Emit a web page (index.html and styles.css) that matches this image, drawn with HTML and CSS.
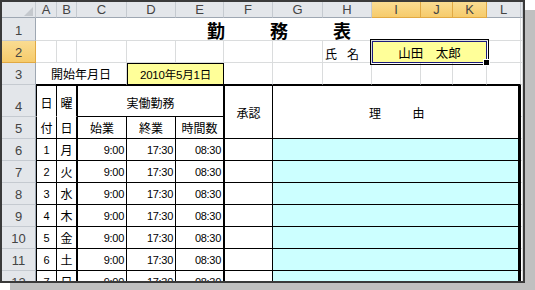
FILE: index.html
```html
<!DOCTYPE html>
<html lang="ja">
<head>
<meta charset="utf-8">
<title>勤務表</title>
<link rel="stylesheet" href="styles.css">
</head>
<body>
<div class="frame">
  <div class="sheet">
    <!-- column headers -->
    <div class="hd corner"></div>
    <div class="hd">A</div>
    <div class="hd">B</div>
    <div class="hd">C</div>
    <div class="hd">D</div>
    <div class="hd">E</div>
    <div class="hd">F</div>
    <div class="hd">G</div>
    <div class="hd">H</div>
    <div class="hd sel">I</div>
    <div class="hd sel">J</div>
    <div class="hd sel">K</div>
    <div class="hd">L</div>
    <div class="hd"></div>

    <!-- row 1 -->
    <div class="rh">1</div>
    <div class="c title">勤　　務　　表</div>
    <div class="c"></div>

    <!-- row 2 -->
    <div class="rh sel">2</div>
    <div class="c"></div>
    <div class="c"></div>
    <div class="c"></div>
    <div class="c"></div>
    <div class="c"></div>
    <div class="c"></div>
    <div class="c"></div>
    <div class="c label">氏　名</div>
    <div class="c name">山田　太郎<span class="handle"></span></div>
    <div class="c"></div>
    <div class="c"></div>

    <!-- row 3 -->
    <div class="rh">3</div>
    <div class="c span3 tt jp">開始年月日</div>
    <div class="c date">2010年5月1日</div>
    <div class="c tt"></div>
    <div class="c tt"></div>
    <div class="c tt"></div>
    <div class="c tt"></div>
    <div class="c tt"></div>
    <div class="c tt"></div>
    <div class="c tt"></div>
    <div class="c"></div>

    <!-- row 4 -->
    <div class="rh">4</div>
    <div class="c colA top open jp hdr">日</div>
    <div class="c colB top open jp hdr">曜</div>
    <div class="c span3 work top jp hdr">実働勤務</div>
    <div class="c colF top rows2 jp">承認</div>
    <div class="c reason top jp">理　　由</div>
    <div class="c"></div>

    <!-- row 5 -->
    <div class="rh">5</div>
    <div class="c colA jp">付</div>
    <div class="c colB jp">日</div>
    <div class="c colC jp">始業</div>
    <div class="c colD jp">終業</div>
    <div class="c colE jp">時間数</div>
    <div class="c"></div>

    <!-- row 6 -->
    <div class="rh">6</div>
    <div class="c colA num">1</div>
    <div class="c colB jp">月</div>
    <div class="c colC num r">9:00</div>
    <div class="c colD num r">17:30</div>
    <div class="c colE num r">08:30</div>
    <div class="c colF"></div>
    <div class="c memo"></div>
    <div class="c"></div>

    <!-- row 7 -->
    <div class="rh">7</div>
    <div class="c colA num">2</div>
    <div class="c colB jp">火</div>
    <div class="c colC num r">9:00</div>
    <div class="c colD num r">17:30</div>
    <div class="c colE num r">08:30</div>
    <div class="c colF"></div>
    <div class="c memo"></div>
    <div class="c"></div>

    <!-- row 8 -->
    <div class="rh">8</div>
    <div class="c colA num">3</div>
    <div class="c colB jp">水</div>
    <div class="c colC num r">9:00</div>
    <div class="c colD num r">17:30</div>
    <div class="c colE num r">08:30</div>
    <div class="c colF"></div>
    <div class="c memo"></div>
    <div class="c"></div>

    <!-- row 9 -->
    <div class="rh">9</div>
    <div class="c colA num">4</div>
    <div class="c colB jp">木</div>
    <div class="c colC num r">9:00</div>
    <div class="c colD num r">17:30</div>
    <div class="c colE num r">08:30</div>
    <div class="c colF"></div>
    <div class="c memo"></div>
    <div class="c"></div>

    <!-- row 10 -->
    <div class="rh">10</div>
    <div class="c colA num">5</div>
    <div class="c colB jp">金</div>
    <div class="c colC num r">9:00</div>
    <div class="c colD num r">17:30</div>
    <div class="c colE num r">08:30</div>
    <div class="c colF"></div>
    <div class="c memo"></div>
    <div class="c"></div>

    <!-- row 11 -->
    <div class="rh">11</div>
    <div class="c colA num">6</div>
    <div class="c colB jp">土</div>
    <div class="c colC num r">9:00</div>
    <div class="c colD num r">17:30</div>
    <div class="c colE num r">08:30</div>
    <div class="c colF"></div>
    <div class="c memo"></div>
    <div class="c"></div>

    <!-- row 12 -->
    <div class="rh">12</div>
    <div class="c colA num">7</div>
    <div class="c colB jp">日</div>
    <div class="c colC num r">9:00</div>
    <div class="c colD num r">17:30</div>
    <div class="c colE num r">08:30</div>
    <div class="c colF"></div>
    <div class="c memo"></div>
    <div class="c"></div>
  </div>
</div>
</body>
</html>
```

FILE: styles.css
```css
* { box-sizing: border-box; }

html, body {
  margin: 0;
  padding: 0;
  background: #ffffff;
}

body {
  width: 535px;
  height: 290px;
  overflow: hidden;
}

.frame {
  width: 525px;
  height: 283px;
  border: 2px solid #3a3a3a;
  box-shadow: 10px 10px 0 #c0c0c0;
  background: #ffffff;
  overflow: hidden;
}

.sheet {
  display: grid;
  grid-template-columns: 34px 21px 20px 50px 49px 48px 49px 50px 49px 49px 32px 34px 34px 2px;
  grid-template-rows: 16px 23px 22px 22px 32px 22px repeat(7, 22px);
  font-family: "Liberation Sans", "Noto Sans CJK JP", sans-serif;
  color: #000;
}

/* headers */
.hd {
  background: #e3e6ea;
  border-right: 1px solid #c5cad0;
  border-bottom: 1px solid #9ea7b2;
  color: #444;
  font-size: 13px;
  line-height: 13px;
  display: flex;
  align-items: flex-end;
  justify-content: center;
  padding-bottom: 1px;
}

.hd.sel,
.rh.sel {
  background: linear-gradient(#fadc92, #f6cb6b);
  border-right-color: #e1a943;
  border-bottom-color: #e1a943;
}

.corner {
  justify-content: flex-end;
  padding: 0 2px 1px 0;
}

.corner::after {
  content: "";
  width: 0;
  height: 0;
  border-left: 9px solid transparent;
  border-bottom: 9px solid #c4c8cd;
}

.rh {
  background: #e3e6ea;
  border-right: 1px solid #9ea7b2;
  border-bottom: 1px solid #c5cad0;
  color: #444;
  font-size: 13px;
  line-height: 13px;
  display: flex;
  align-items: flex-end;
  justify-content: center;
  padding-bottom: 3px;
}

/* cells */
.c {
  border-right: 1px solid #dadcdd;
  border-bottom: 1px solid #dadcdd;
  display: flex;
  align-items: center;
  justify-content: center;
  font-size: 12px;
  line-height: 14px;
  white-space: nowrap;
  overflow: hidden;
}

.jp {
  font-family: "Noto Sans CJK JP", sans-serif;
  font-size: 12px;
  padding-top: 1px;
}

.num {
  font-family: "Liberation Sans", sans-serif;
  font-size: 11px;
  letter-spacing: -0.3px;
  padding-top: 1px;
}

.r {
  justify-content: flex-end;
  padding-right: 2px;
}

.title {
  grid-column: span 12;
  overflow: visible;
  font-family: "Noto Sans CJK JP", sans-serif;
  font-size: 18px;
  line-height: 20px;
  font-weight: 700;
  letter-spacing: 3px;
  padding: 2px 0 0 5px;
}

.label {
  font-family: "Noto Sans CJK JP", sans-serif;
  font-size: 12px;
  letter-spacing: -1px;
  justify-content: flex-start;
  align-items: flex-end;
  padding: 0 0 1px 2px;
}

.name {
  grid-column: span 3;
  position: relative;
  overflow: visible;
  background: #ffff99;
  border: 1px solid #1c1c7c;
  outline: 1px solid #000;
  outline-offset: 1px;
  font-family: "Noto Sans CJK JP", sans-serif;
  font-size: 12.5px;
  padding-top: 1px;
}

.handle {
  position: absolute;
  right: -4px;
  bottom: -4px;
  width: 7px;
  height: 7px;
  background: #000;
  border: 1px solid #fff;
}

.span3 { grid-column: span 3; }

.tt { border-bottom-color: #000; }

.date {
  grid-column: span 2;
  background: #ffff99;
  border: 1px solid #000;
  font-family: "Liberation Sans", "Noto Sans CJK JP", sans-serif;
  font-size: 11.5px;
  letter-spacing: -0.2px;
  padding-top: 1px;
}

/* table */
.top { border-top: 1px solid #000; }

.colA {
  border-left: 1px solid #000;
  border-right-color: #000;
  border-bottom-color: #000;
}

.colB {
  border-right-color: #000;
  border-bottom-color: #000;
}

.colC {
  border-left: 1px solid #000;
  border-right-color: #000;
  border-bottom-color: #000;
}

.colD,
.colE {
  border-right-color: #000;
  border-bottom-color: #000;
}

.colF {
  border-left: 1px solid #000;
  border-right-color: #000;
  border-bottom-color: #000;
}

.open { border-bottom-color: #fff; }

.hdr { padding-top: 3px; }

.rows2 { grid-row: span 2; }

.work {
  border-left: 1px solid #000;
  border-right-color: #000;
  border-bottom-color: #000;
}

.reason {
  grid-column: span 6;
  grid-row: span 2;
  border-right: 3px solid #000;
  border-bottom-color: #000;
  letter-spacing: 2.5px;
  padding-left: 5px;
}

.memo {
  grid-column: span 6;
  background: #ccffff;
  border-right: 3px solid #000;
  border-bottom-color: #000;
}
```
